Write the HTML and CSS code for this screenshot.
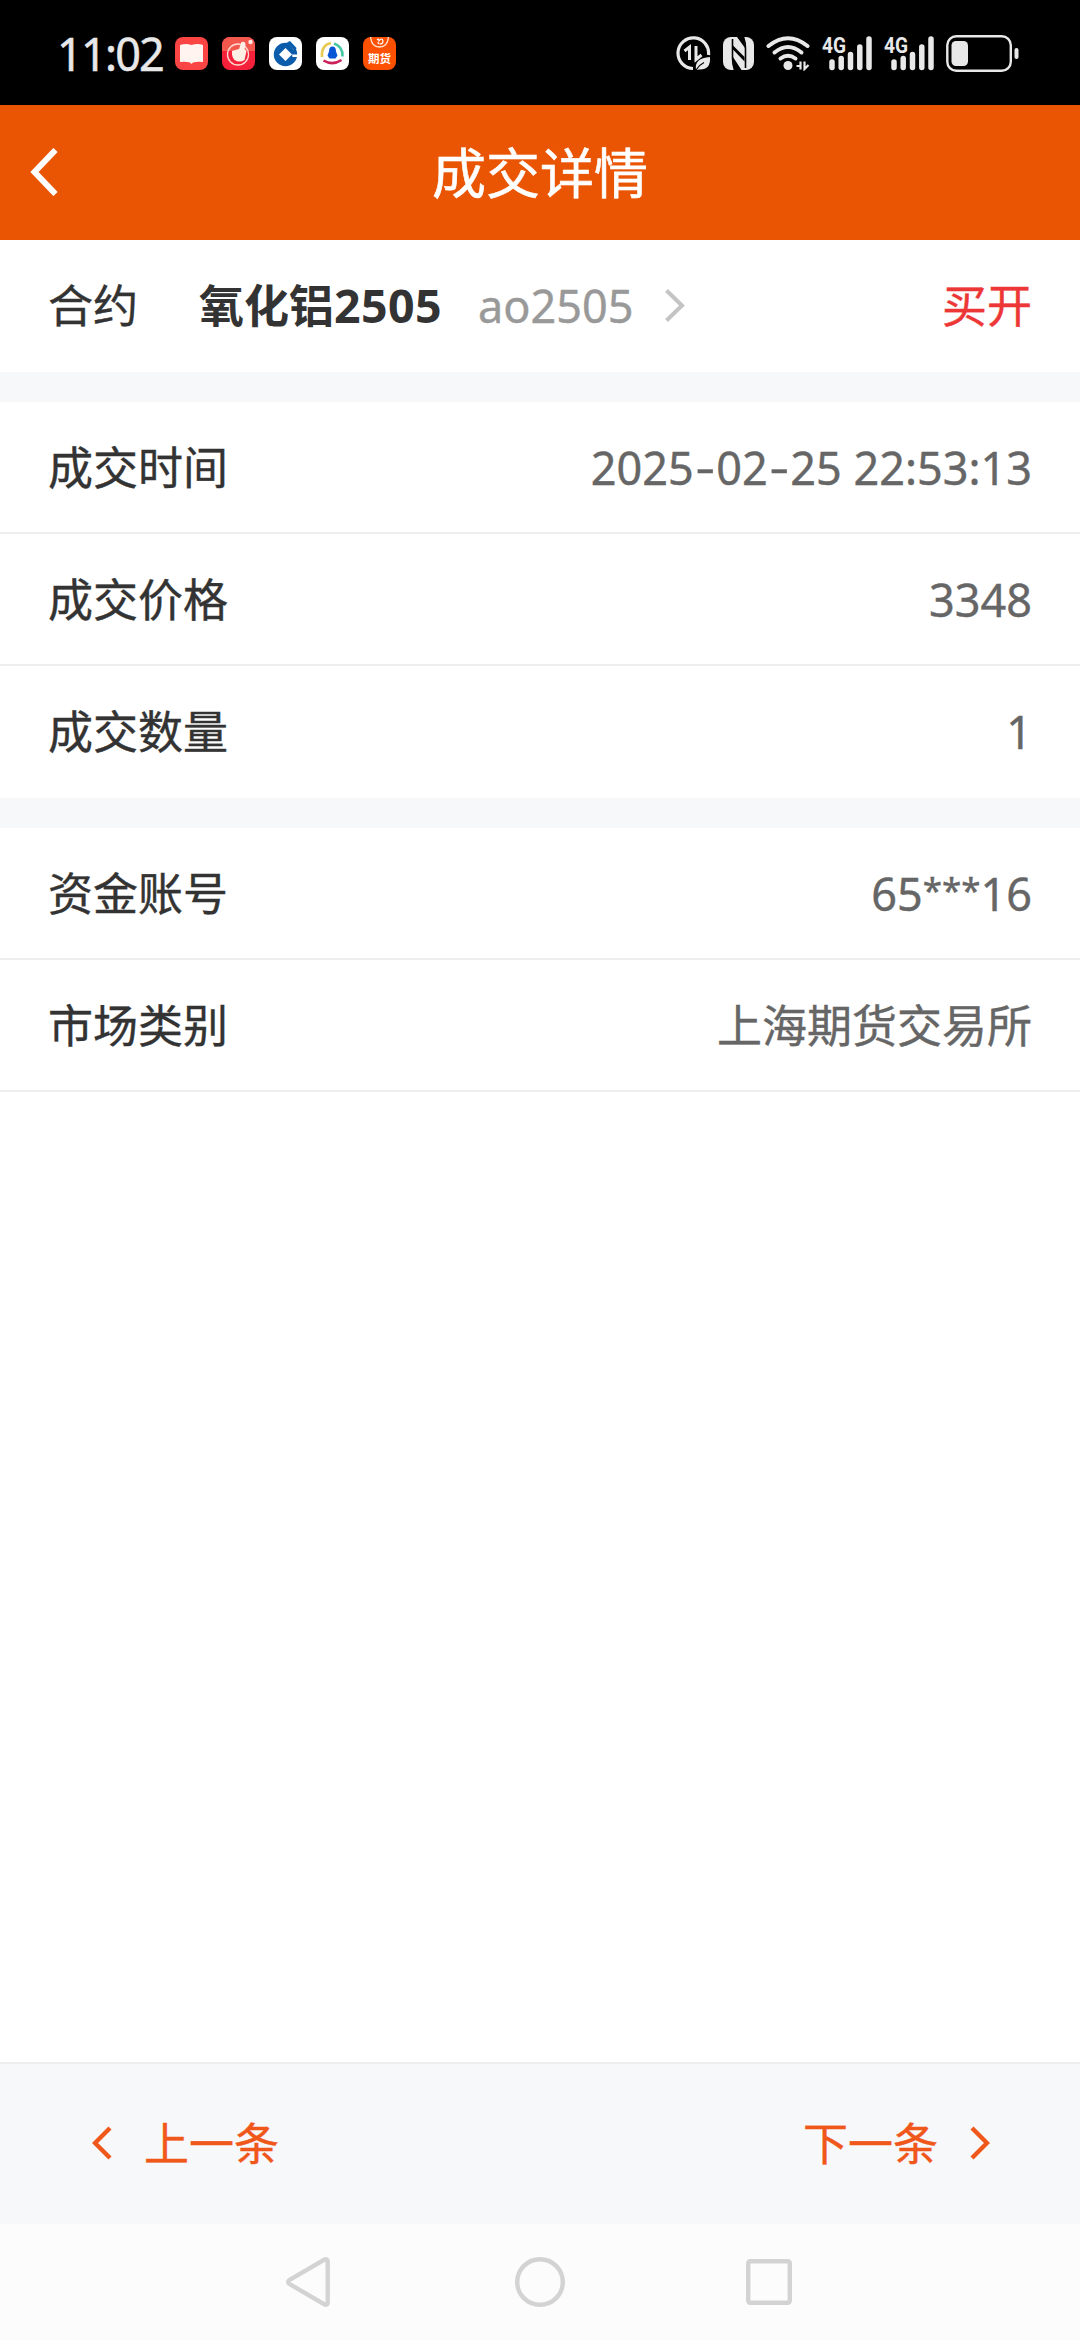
FILE: index.html
```
<!DOCTYPE html>
<html lang="zh-CN">
	<head>
		<meta charset="utf-8">
		<meta name="viewport" content="width=device-width, initial-scale=1">
		<title>成交详情</title>
		<link rel="stylesheet" href="styles.css">
	</head>
	<body>
		<div class="status">
			<span class="clock">11:02</span>
			<div class="apps">
				<svg width="33" height="33" viewBox="0 0 33 33">
					<rect width="33" height="33" rx="8" fill="#fb4444"/>
					<path d="M5 8q6-2 11.500 0q6-2 11.500 0v17q-6-.5-10 .5l-1.500 1.500l-1.500-1.500q-4-1-10-.5z" fill="#fff4ef"/>
				</svg>
				<svg width="33" height="33" viewBox="0 0 33 33">
					<rect width="33" height="33" rx="8" fill="#f5203a"/>
					<path d="M0 14V8a8 8 0 0 1 8-8h17a8 8 0 0 1 8 8v6z" fill="#f2584e"/>
					<circle cx="16" cy="17.500" r="10.500" fill="none" stroke="#ffd9d0" stroke-width="1.300"/>
					<path d="M10 14l7-2l2.500-7q4-1 4 3l-1 4l2 2l-2 9q-5 3-10 0q-3-3-2.500-9z" fill="#fff0e6"/>
					<circle cx="28.500" cy="5" r="2.200" fill="#ffe9e0"/>
				</svg>
				<svg width="33" height="33" viewBox="0 0 33 33">
					<rect width="33" height="33" rx="8" fill="#fff"/>
					<circle cx="16.500" cy="17.500" r="11.700" fill="#0b5cab"/>
					<path d="M16.500 11l6.500 6.500l-6.500 6.500l-6.500-6.500z" fill="#fff"/>
					<path d="M17 3.500L25 13h6V4z" fill="#fff"/>
					<path d="M21 4l6.500 7l-1 3.500l-8.500-9z" fill="#0b5cab"/>
					<path d="M23 17.500h6v2.500h-5.500z" fill="#fff"/>
				</svg>
				<svg width="33" height="33" viewBox="0 0 33 33">
					<rect width="33" height="33" rx="8" fill="#fff"/>
					<path d="M6 20Q5 8 15 6" fill="none" stroke="#e8cb55" stroke-width="2.600"/>
					<path d="M18 6.500q9 3 8.500 13" fill="none" stroke="#45c6a5" stroke-width="2.600"/>
					<path d="M7.500 23.500q9 5.500 18-.5" fill="none" stroke="#cb2058" stroke-width="2.600"/>
					<path d="M16.500 9.500q3.500 0 3.500 5l1.500 4l-2 3h-6l-2-3l1.500-4q0-5 3.500-5z" fill="#0a55d5"/>
				</svg>
				<svg width="33" height="33" viewBox="0 0 33 33">
					<rect width="33" height="33" rx="8" fill="#fd5000"/>
					<path d="M7.500 0q1 10 9 10q8 0 9-10" fill="none" stroke="#ffe3d2" stroke-width="1.300"/>
					<path d="M14 3q2-2 2 1q3-4 4 0q0 3-3 3M14.500 5.500l2 1.500" fill="none" stroke="#fff" stroke-width="1.200"/>
					<text x="16.500" y="25.500" class="app-text">期货</text>
				</svg>
			</div>
			<div class="signals">
				<svg width="35" height="35" viewBox="0 0 35 35">
					<path d="M32.500 19A15.300 15.300 0 1 0 17 32.500" fill="none" stroke="#e8e8e8" stroke-width="3.200"/>
					<path d="M8.500 15l5-4v13M20 10v13.500l5.500-4.500" fill="none" stroke="#e8e8e8" stroke-width="3"/>
					<path d="M20 34q-2-12 14-13q1 13-11 12.500z" fill="#e8e8e8"/>
					<path d="M20 34q3-5 8-7.500" fill="none" stroke="#000" stroke-width="1.200"/>
				</svg>
				<svg width="31" height="33" viewBox="0 0 31 33">
					<rect width="31" height="33" rx="8" fill="#e8e8e8"/>
					<path d="M9.500 2v19q0 7 2 12M20.500 0q2 5 2 12v19" fill="none" stroke="#000" stroke-width="1.600"/>
					<path d="M10 8.500L21.500 20v4.500L10 12.500z"/>
					<path d="M10 20l8.500 13H11.500q-1.500-4-1.500-9zM14 0h6.500q1.500 4 1.500 11z"/>
				</svg>
				<svg width="44" height="35" viewBox="0 0 44 35">
					<g fill="none" stroke="#e8e8e8" stroke-width="4" stroke-linecap="round">
						<path d="M2.500 10Q22-5.500 41.500 10"/>
						<path d="M8.500 16.500Q22 5.500 35.500 16.500"/>
						<path d="M14.500 22.500q7.500-5.500 15 0"/>
					</g>
					<circle cx="22" cy="29.500" r="4.500" fill="#e8e8e8"/>
					<path d="M30.500 30h4v-4.500v8M38.500 25.500v7.500l4-4" fill="none" stroke="#e8e8e8" stroke-width="2.200"/>
				</svg>
				<svg class="cell" width="50" height="35" viewBox="0 0 50 35">
					<text x="0" y="16.500" textLength="24" lengthAdjust="spacingAndGlyphs" class="cell-text">4G</text>
					<path d="M10 26v5.500M19.200 22.500v9M28.500 18.500v13M37.800 11v20.500M47 3v28.500" class="bars"/>
				</svg>
				<svg class="cell" width="50" height="35" viewBox="0 0 50 35">
					<text x="0" y="16.500" textLength="24" lengthAdjust="spacingAndGlyphs" class="cell-text">4G</text>
					<path d="M10 26v5.500M19.200 22.500v9M28.500 18.500v13M37.800 11v20.500M47 3v28.500" class="bars"/>
				</svg>
				<svg width="73" height="37" viewBox="0 0 73 37">
					<rect x="1.300" y="1.300" width="63.500" height="34.400" rx="9" fill="none" stroke="#e8e8e8" stroke-width="2.400"/>
					<rect x="5.500" y="6" width="16.500" height="25" rx="4.500" fill="#e8e8e8"/>
					<rect x="68.500" y="13" width="4" height="11" rx="2" fill="#e8e8e8"/>
				</svg>
			</div>
		</div>

		<header class="header">
			<svg class="back" width="28" height="48" viewBox="0 0 28 48">
				<path d="M25.500 2L4.500 24l21 22" fill="none" stroke="#fff" stroke-width="6"/>
			</svg>
			<h1>成交详情</h1>
		</header>

		<main>
			<section>
				<div class="row">
					<span class="label">合约</span>
					<b class="name">氧化铝<span class="num">2505</span></b>
					<span class="code num">ao2505</span>
					<svg class="more" width="20" height="33" viewBox="0 0 20 33">
						<path d="M1.500 1.500l15.500 15l-15.500 15" fill="none" stroke="#c4c4c4" stroke-width="4"/>
					</svg>
					<span class="side">买开</span>
				</div>
			</section>
			<section>
				<div class="row"><span class="label">成交时间</span><span class="value num">2025<span class="dash">-</span>02<span class="dash">-</span>25 22:53:13</span></div>
				<div class="row"><span class="label">成交价格</span><span class="value num">3348</span></div>
				<div class="row"><span class="label">成交数量</span><span class="value num">1</span></div>
			</section>
			<section>
				<div class="row"><span class="label">资金账号</span><span class="value num">65<span class="mask">***</span>16</span></div>
				<div class="row"><span class="label">市场类别</span><span class="value cjk">上海期货交易所</span></div>
			</section>
		</main>

		<footer class="pager">
			<a class="page-link">
				<svg width="20" height="34" viewBox="0 0 20 34"><path d="M18 2L3 17l15 15" fill="none" stroke="#f0571b" stroke-width="4.400"/></svg>
				<span>上一条</span>
			</a>
			<a class="page-link">
				<span>下一条</span>
				<svg width="20" height="34" viewBox="0 0 20 34"><path d="M2 2l15 15L2 32" fill="none" stroke="#f0571b" stroke-width="4.400"/></svg>
			</a>
		</footer>

		<nav class="keys">
			<svg width="50" height="50" viewBox="0 0 50 50"><path d="M4.200 23.200L39.500 2.500Q42.700 1.500 42.700 4.500v41q0 3-3.200 2L4.200 26.800q-2-1.800 0-3.600z"/></svg>
			<svg width="50" height="50" viewBox="0 0 50 50"><circle cx="25" cy="25" r="22.800"/></svg>
			<svg width="50" height="50" viewBox="0 0 50 50"><rect x="3.200" y="4.200" width="41.600" height="41.600" rx="2"/></svg>
		</nav>
	</body>
</html>
```

FILE: styles.css
```
* {
	box-sizing: border-box;
}

body {
	margin: 0;
	height: 2340px;
	display: flex;
	flex-direction: column;
	background: white;
	color: #333;
	font-family: "Noto Sans CJK SC", sans-serif;
	font-size: 45px;
	line-height: 1;
}

svg {
	display: block;
	flex: none;
}

.num, .clock {
	font-family: "Noto Sans", "Noto Sans CJK SC", sans-serif;
}

.status {
	height: 105px;
	padding: 2px 61px 0 57px;
	display: flex;
	align-items: center;
	background: black;
	color: #e8e8e8;
}

.clock {
	width: 118px;
	font-size: 45px;
	letter-spacing: -1.8px;
	-webkit-text-stroke: .5px;
}

.apps {
	display: flex;
	gap: 14px;
}

.app-text {
	fill: white;
	font-size: 11.5px;
	font-weight: bold;
	text-anchor: middle;
}

.signals {
	display: flex;
	align-items: center;
	gap: 12px;
	margin-left: auto;
}

.cell {
	overflow: visible;
}

.cell-text {
	fill: #e8e8e8;
	font-family: Roboto, sans-serif;
	font-size: 22px;
	font-weight: bold;
}

.bars {
	stroke: #e8e8e8;
	stroke-width: 5.5;
	stroke-linecap: round;
}

.header {
	height: 135px;
	padding-bottom: 2px;
	display: grid;
	grid-template-columns: 108px 1fr 108px;
	align-items: center;
	background: #ea5504;
	color: white;
}

.back {
	margin-left: 30px;
}

h1 {
	margin: 0;
	padding-bottom: 2px;
	font-size: 54px;
	font-weight: normal;
	text-align: center;
	-webkit-text-stroke: .6px;
}

main {
	flex: 1;
}

section + section {
	border-top: 30px solid #f7f8fa;
}

.row {
	height: 132px;
	padding: 0 48px;
	display: flex;
	align-items: center;
	border-bottom: 2px solid #eee;
}

section:not(:last-child) .row:last-child {
	border-bottom-color: white;
}

.label, .side, .cjk {
	padding-bottom: 3px;
}

.label, .side, .cjk, .page-link {
	-webkit-text-stroke: .4px;
}

.value {
	margin-left: auto;
	color: #666;
}

.num {
	padding-top: 1px;
}

.value.num, .code {
	-webkit-text-stroke: .4px;
}

.dash {
	display: inline-block;
	margin: 0 4px;
	transform: translateY(-2px) scaleX(1.35);
}

.mask {
	display: inline-block;
	font-size: 35px;
	transform: translateY(-8px);
}

.name {
	margin-left: 61px;
}

.name .num {
	font-size: 46.5px;
	letter-spacing: .4px;
}

.code {
	margin-left: 36px;
	color: #999;
}

.more {
	margin-left: 32px;
}

.side {
	margin-left: auto;
	color: #ed3737;
}

.pager {
	height: 162px;
	padding: 0 90px 2px 92px;
	display: flex;
	align-items: center;
	justify-content: space-between;
	background: #f7f8fa;
	border-top: 2px solid #eee;
	color: #f0571b;
}

.page-link {
	display: flex;
	align-items: center;
	gap: 32px;
}

.page-link span {
	padding-bottom: 4px;
}

.keys {
	height: 116px;
	display: flex;
	align-items: center;
	justify-content: center;
	gap: 180px;
	background: #fcfcfc;
}

.keys svg {
	fill: none;
	stroke: #d3d3d3;
	stroke-width: 4.4;
}
```
